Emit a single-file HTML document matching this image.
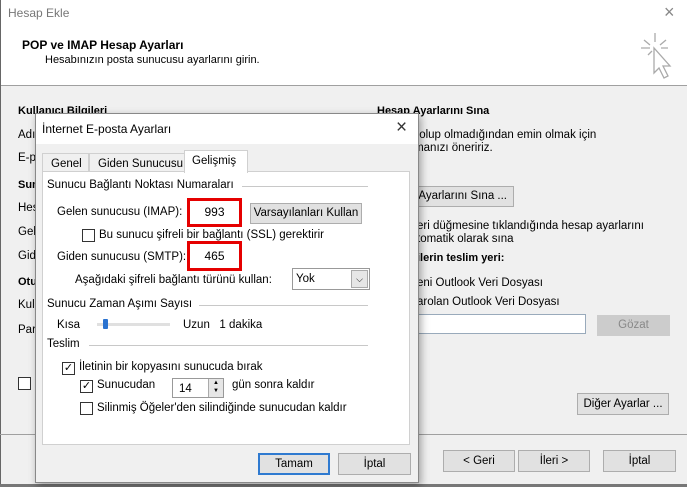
<!DOCTYPE html>
<html><head><meta charset="utf-8"><style>
*{box-sizing:border-box;margin:0;padding:0}
body{width:687px;height:487px;overflow:hidden;position:relative;background:#f0f0f0;font-family:"Liberation Sans",sans-serif;font-size:11.5px;color:#000}
.a{position:absolute;white-space:nowrap}
.btn{position:absolute;background:#e1e1e1;border:1px solid #adadad;text-align:center;font-size:11.5px}
.cb{position:absolute;width:13px;height:13px;border:1px solid #333;background:#fff}
.red{position:absolute;border:3px solid #e50000;background:#fff;text-align:center;font-size:12px}
.ln{position:absolute;height:1px;background:#c8c8c8}
</style></head><body>
<div class="a" style="left:0;top:0;width:687px;height:86px;background:#fff;border-bottom:1px solid #a0a0a0"></div>
<div class="a" style="left:0;top:0;width:1px;height:487px;background:#666"></div>
<div class="a" style="left:8px;top:6px;font-size:12px;color:#777">Hesap Ekle</div>
<div class="a" style="left:664px;top:2px;font-size:18px;color:#888">×</div>
<div class="a" style="left:22px;top:38px;font-weight:bold;font-size:12px">POP ve IMAP Hesap Ayarları</div>
<div class="a" style="left:45px;top:54px;font-size:11px">Hesabınızın posta sunucusu ayarlarını girin.</div>
<svg class="a" style="left:636px;top:30px" width="40" height="55" viewBox="0 0 40 55" fill="none" stroke="#aaa" stroke-width="1.3"><path d="M19 3v9M8 10l6 5M30 10l-6 5M5 18h9M25 18h7M12 25l4-4"/><path d="M18 18l0 25l5-5l5 10l4-2l-5-10l7 0z" fill="#fff"/></svg>
<div class="a" style="left:18px;top:105px;font-weight:bold;font-size:11px">Kullanıcı Bilgileri</div>
<div class="a" style="left:18px;top:129px">Adı</div>
<div class="a" style="left:18px;top:152px">E-p</div>
<div class="a" style="left:18px;top:179px;font-weight:bold;font-size:11px">Sun</div>
<div class="a" style="left:18px;top:202px">Hes</div>
<div class="a" style="left:18px;top:226px">Gel</div>
<div class="a" style="left:18px;top:250px">Gid</div>
<div class="a" style="left:18px;top:276px;font-weight:bold;font-size:11px">Otu</div>
<div class="a" style="left:18px;top:299px">Kul</div>
<div class="a" style="left:18px;top:324px">Par</div>
<div class="cb" style="left:18px;top:377px"></div>
<div class="a" style="left:377px;top:105px;font-weight:bold;font-size:11px">Hesap Ayarlarını Sına</div>
<div class="a" style="left:377px;top:129px">n doğru olup olmadığından emin olmak için</div>
<div class="a" style="left:377px;top:142px">ızı sınamanızı öneririz.</div>
<div class="btn" style="left:400px;top:186px;width:114px;height:21px;line-height:19px;text-align:right;padding-right:6px">Ayarlarını Sına ...</div>
<div class="a" style="left:417px;top:220px">eri düğmesine tıklandığında hesap ayarlarını</div>
<div class="a" style="left:417px;top:233px">tomatik olarak sına</div>
<div class="a" style="left:417px;top:252px;font-weight:bold;font-size:11px">ilerin teslim yeri:</div>
<div class="a" style="left:417px;top:277px">eni Outlook Veri Dosyası</div>
<div class="a" style="left:417px;top:296px">arolan Outlook Veri Dosyası</div>
<div class="a" style="left:410px;top:314px;width:176px;height:20px;background:#fff;border:1px solid #9ab"></div>
<div class="btn" style="left:597px;top:315px;width:73px;height:21px;line-height:19px;background:#ccc;border-color:#ccc;color:#888">Gözat</div>
<div class="btn" style="left:577px;top:393px;width:92px;height:22px;line-height:20px">Diğer Ayarlar ...</div>
<div class="a" style="left:0;top:434px;width:687px;height:1px;background:#a0a0a0"></div>
<div class="btn" style="left:443px;top:450px;width:72px;height:22px;line-height:20px">&lt; Geri</div>
<div class="btn" style="left:518px;top:450px;width:72px;height:22px;line-height:20px">İleri &gt;</div>
<div class="btn" style="left:603px;top:450px;width:73px;height:22px;line-height:20px">İptal</div>
<div class="a" style="left:0;top:484px;width:687px;height:3px;background:#777"></div>

<div class="a" style="left:35px;top:113px;width:384px;height:370px;background:#f0f0f0;border:1px solid #888;box-shadow:2px 3px 8px rgba(0,0,0,.35)">
<div class="a" style="left:0;top:0;width:382px;height:30px;background:#fff"></div>
<div class="a" style="left:6px;top:8px;font-size:12px">İnternet E-posta Ayarları</div>
<div class="a" style="left:360px;top:3px;font-size:19px;color:#333">×</div>
<div class="a" style="left:6px;top:57px;width:368px;height:274px;background:#fff;border:1px solid #d0d0d0"></div>
<div class="a" style="left:6px;top:39px;width:47px;height:19px;border:1px solid #d0d0d0;border-bottom:none;padding:4px 0 0 8px">Genel</div>
<div class="a" style="left:53px;top:39px;width:96px;height:19px;border:1px solid #d0d0d0;border-bottom:none;padding:4px 0 0 8px">Giden Sunucusu</div>
<div class="a" style="left:148px;top:36px;width:64px;height:23px;background:#fff;border:1px solid #d0d0d0;border-bottom:none;padding:4px 0 0 7px">Gelişmiş</div>
<div class="a" style="left:11px;top:65px">Sunucu Bağlantı Noktası Numaraları</div>
<div class="ln" style="left:206px;top:72px;width:126px"></div>
<div class="a" style="left:21px;top:92px">Gelen sunucusu (IMAP):</div>
<div class="red" style="left:151px;top:84px;width:55px;height:29px;line-height:23px">993</div>
<div class="btn" style="left:214px;top:89px;width:112px;height:21px;line-height:19px">Varsayılanları Kullan</div>
<div class="cb" style="left:46px;top:115px"></div>
<div class="a" style="left:63px;top:115px">Bu sunucu şifreli bir bağlantı (SSL) gerektirir</div>
<div class="a" style="left:21px;top:137px">Giden sunucusu (SMTP):</div>
<div class="red" style="left:151px;top:127px;width:55px;height:30px;line-height:24px">465</div>
<div class="a" style="left:39px;top:160px">Aşağıdaki şifreli bağlantı türünü kullan:</div>
<div class="a" style="left:256px;top:154px;width:78px;height:22px;background:#fff;border:1px solid #999;padding:4px 0 0 3px">Yok<span style="position:absolute;right:1px;top:1px;width:17px;height:18px;background:#e6e6e6;border:1px solid #aaa;font-size:9px;text-align:center;line-height:16px">⌵</span></div>
<div class="a" style="left:11px;top:184px">Sunucu Zaman Aşımı Sayısı</div>
<div class="ln" style="left:163px;top:191px;width:169px"></div>
<div class="a" style="left:21px;top:205px">Kısa</div>
<div class="a" style="left:61px;top:209px;width:73px;height:3px;background:#e0e0e0"></div>
<div class="a" style="left:67px;top:205px;width:5px;height:10px;background:#2a72d0;border-radius:1px"></div>
<div class="a" style="left:147px;top:205px">Uzun&nbsp;&nbsp; 1 dakika</div>
<div class="a" style="left:11px;top:224px">Teslim</div>
<div class="ln" style="left:53px;top:231px;width:279px"></div>
<div class="cb" style="left:26px;top:248px;font-size:11px;line-height:10px;text-align:center">✓</div>
<div class="a" style="left:43px;top:247px">İletinin bir kopyasını sunucuda bırak</div>
<div class="cb" style="left:44px;top:266px;font-size:11px;line-height:10px;text-align:center">✓</div>
<div class="a" style="left:61px;top:265px">Sunucudan</div>
<div class="a" style="left:136px;top:264px;width:52px;height:20px;background:#fff;border:1px solid #999;padding:4px 0 0 6px">14<span style="position:absolute;right:0;top:0;width:15px;height:18px;background:#e6e6e6;border-left:1px solid #aaa;font-size:6px;text-align:center;line-height:8px">▲<br>▼</span></div>
<div class="a" style="left:196px;top:265px">gün sonra kaldır</div>
<div class="cb" style="left:44px;top:288px"></div>
<div class="a" style="left:61px;top:288px">Silinmiş Öğeler'den silindiğinde sunucudan kaldır</div>
<div class="btn" style="left:222px;top:339px;width:72px;height:22px;line-height:18px;border:2px solid #2f7ad0">Tamam</div>
<div class="btn" style="left:302px;top:339px;width:73px;height:22px;line-height:20px">İptal</div>
</div>
</body></html>
